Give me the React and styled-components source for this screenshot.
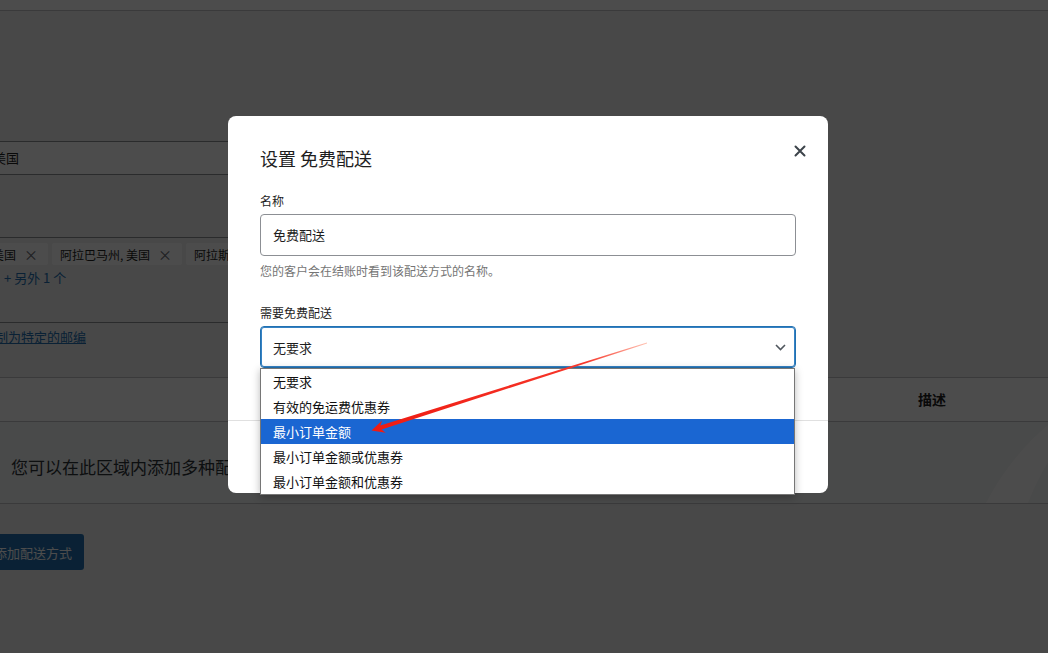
import React from 'react'
import styled, { createGlobalStyle } from 'styled-components'

const GlobalStyle = createGlobalStyle`
  html, body { margin: 0; padding: 0; height: 100%; overflow: hidden; }
  body {
    background: #f0f0f1;
    font-family: "Noto Sans CJK SC", "Noto Sans", sans-serif;
    color: #1e1e1e;
  }
`

const options = ['无要求', '有效的免运费优惠券', '最小订单金额', '最小订单金额或优惠券', '最小订单金额和优惠券']

function App() {
    return (
        <Page>
            <GlobalStyle />
            <TopBar />
            <Content>
                <RegionBox>美国</RegionBox>
                <TagBox>
                    <TagRow>
                        <Tag>美国<TagClose>×</TagClose></Tag>
                        <Tag>阿拉巴马州, 美国<TagClose>×</TagClose></Tag>
                        <Tag>阿拉斯加州, 美国<TagClose>×</TagClose></Tag>
                    </TagRow>
                    <MoreLink>+ 另外 1 个</MoreLink>
                </TagBox>
                <PostcodeLink>限制为特定的邮编</PostcodeLink>
                <Table>
                    <HeadRow>
                        <HeadCell />
                        <HeadCell>名称</HeadCell>
                        <HeadCell>启用</HeadCell>
                        <HeadCell>描述</HeadCell>
                    </HeadRow>
                    <BodyRow>
                        <EmptyText>您可以在此区域内添加多种配送方式。只有该区域内的客户才会看到这些配送方式。</EmptyText>
                        <Swoosh viewBox="0 0 88 81" width="88" height="81">
                            <path d="M26 81 Q50 35 88 3 L88 40 Q76 60 68 81 Z" fill="#ffffff" />
                        </Swoosh>
                    </BodyRow>
                </Table>
                <PrimaryButton>添加配送方式</PrimaryButton>
            </Content>

            <Backdrop>
                <Modal>
                    <ModalHeader>
                        <ModalTitle>设置 免费配送</ModalTitle>
                        <CloseButton aria-label="关闭">
                            <svg width="12" height="12" viewBox="0 0 12 12">
                                <path d="M1.5 1.5 L10.5 10.5 M10.5 1.5 L1.5 10.5" stroke="#3c434a" strokeWidth="2" strokeLinecap="round" />
                            </svg>
                        </CloseButton>
                    </ModalHeader>
                    <ModalBody>
                        <Label>名称</Label>
                        <TextInput>免费配送</TextInput>
                        <Help>您的客户会在结账时看到该配送方式的名称。</Help>
                        <Label $gap={26}>需要免费配送</Label>
                        <SelectWrap>
                            <SelectBox>
                                无要求
                                <svg width="11" height="7" viewBox="0 0 11 7">
                                    <path d="M1 1 L5.5 5.5 L10 1" fill="none" stroke="#50575e" strokeWidth="1.6" />
                                </svg>
                            </SelectBox>
                            <Dropdown>
                                {options.map((item, index) => (
                                    <Option key={item} $active={index === 2}>{item}</Option>
                                ))}
                            </Dropdown>
                        </SelectWrap>
                    </ModalBody>
                    <ModalFooter />
                </Modal>
            </Backdrop>

            {/* annotation arrow */}
            <Annotation viewBox="0 0 1048 653" width="1048" height="653">
                <defs>
                    <linearGradient id="arrowFade" gradientUnits="userSpaceOnUse" x1="647" y1="343" x2="372" y2="430">
                        <stop offset="0" stopColor="#ffc4b4" />
                        <stop offset="0.22" stopColor="#f7372a" />
                        <stop offset="1" stopColor="#ee1b12" />
                    </linearGradient>
                </defs>
                <polygon
                    points="371.5,430.5 385.7,432.8 381.6,429.4 647.1,343.4 646.9,342.6 380.4,425.6 382.1,420.4"
                    fill="url(#arrowFade)"
                />
            </Annotation>
        </Page>
    )
}

export default App

const Page = styled.div`
    position: relative;
    width: 1048px;
    height: 653px;
    overflow: hidden;
`

const TopBar = styled.div`
    height: 10px;
    background: #fff;
    border-bottom: 1px solid #c3c4c7;
`

const Content = styled.div`
    margin-left: -20px;
    width: 1088px;
    padding-top: 130px;
    display: flex;
    flex-direction: column;
    align-items: flex-start;
`

const RegionBox = styled.div`
    box-sizing: border-box;
    width: 700px;
    height: 34px;
    padding-left: 12px;
    background: #fff;
    border: 1px solid #8c8f94;
    font-size: 13px;
    line-height: 32px;
`

const TagBox = styled.div`
    box-sizing: border-box;
    margin-top: 62px;
    width: 700px;
    height: 86px;
    padding: 5px 0 0 4px;
    border-top: 1px solid #8c8f94;
    border-bottom: 1px solid #8c8f94;
`

const TagRow = styled.div`
    display: flex;
    gap: 4px;
`

const Tag = styled.span`
    display: inline-flex;
    align-items: center;
    height: 22px;
    padding: 0 10px 0 8px;
    background: #fff;
    border-radius: 2px;
    font-size: 12px;
    white-space: nowrap;
`

const TagClose = styled.span`
    margin-left: 8px;
    font-size: 14px;
    color: #646970;
`

const MoreLink = styled.div`
    margin: 4px 0 0 20px;
    font-size: 13px;
    line-height: 18px;
    color: #2271b1;
`

const PostcodeLink = styled.a`
    margin: 5px 0 0 2px;
    font-size: 13px;
    line-height: 18px;
    color: #2271b1;
    text-decoration: underline;
`

const Table = styled.div`
    margin-top: 31px;
    width: 100%;
    background: #fff;
    border-top: 1px solid #c3c4c7;
`

const HeadRow = styled.div`
    display: grid;
    grid-template-columns: 268px 300px 350px 1fr;
    height: 43px;
    border-bottom: 1px solid #c3c4c7;
`

const HeadCell = styled.div`
    padding-left: 20px;
    font-size: 14px;
    font-weight: 700;
    line-height: 43px;
`

const BodyRow = styled.div`
    position: relative;
    box-sizing: border-box;
    height: 82px;
    padding: 8px 0 0 31px;
    display: flex;
    align-items: center;
    background: #f6f7f7;
    border-bottom: 1px solid #c3c4c7;
    overflow: hidden;
`

const EmptyText = styled.p`
    margin: 0;
    font-size: 17px;
    line-height: 24px;
    color: #2c3338;
    white-space: nowrap;
`

const Swoosh = styled.svg`
    position: absolute;
    left: 980px;
    top: 0;
`

const PrimaryButton = styled.button`
    margin: 30px 0 0 2px;
    height: 36px;
    padding: 0 12px;
    border: 0;
    border-radius: 3px;
    background: #2271b1;
    color: #fff;
    font-family: inherit;
    font-size: 13px;
`

const Backdrop = styled.div`
    position: absolute;
    inset: 0;
    z-index: 1;
    background: rgba(0, 0, 0, 0.7);
    display: flex;
    align-items: flex-start;
    padding: 116px 0 0 228px;
`

const Modal = styled.div`
    position: relative;
    width: 600px;
    height: 377px;
    background: #fff;
    border-radius: 8px;
    display: flex;
    flex-direction: column;
`

const ModalHeader = styled.div`
    display: flex;
    justify-content: space-between;
    align-items: flex-start;
    padding: 29px 22px 0 32px;
`

const ModalTitle = styled.h1`
    margin: 0;
    font-size: 18px;
    line-height: 26px;
    font-weight: 400;
    color: #1e1e1e;
`

const CloseButton = styled.button`
    display: flex;
    width: 12px;
    height: 12px;
    margin-top: 0;
    padding: 0;
    border: 0;
    background: none;
`

const ModalBody = styled.div`
    display: flex;
    flex-direction: column;
    padding: 0 32px 52px;
`

const Label = styled.label`
    margin-top: ${p => p.$gap || 22}px;
    margin-bottom: 5px;
    font-size: 12px;
    line-height: 16px;
    color: #1e1e1e;
`

const TextInput = styled.div`
    box-sizing: border-box;
    height: 42px;
    padding: 0 12px;
    border: 1px solid #8c8f94;
    border-radius: 4px;
    font-size: 13px;
    line-height: 40px;
`

const Help = styled.p`
    margin: 7px 0 0;
    font-size: 12px;
    line-height: 16px;
    color: #757575;
`

const SelectWrap = styled.div`
    position: relative;
`

const SelectBox = styled.div`
    box-sizing: border-box;
    height: 42px;
    padding: 0 9px 0 12px;
    display: flex;
    align-items: center;
    justify-content: space-between;
    border: 1px solid #2271b1;
    box-shadow: inset 0 0 0 1px #3582c4;
    border-radius: 4px;
    font-size: 13px;
`

const Dropdown = styled.div`
    position: absolute;
    top: 100%;
    left: 0;
    width: calc(100% - 1px);
    box-sizing: border-box;
    background: #fff;
    border: 1px solid #767676;
    box-shadow: 0 2px 8px rgba(0, 0, 0, 0.28);
    z-index: 2;
`

const Option = styled.div`
    height: 25px;
    padding-left: 12px;
    font-size: 13px;
    line-height: 25px;
    color: ${p => (p.$active ? '#fff' : '#101010')};
    background: ${p => (p.$active ? '#1a66d2' : 'transparent')};
`

const ModalFooter = styled.div`
    flex: 1;
    border-top: 1px solid #e0e0e0;
`

const Annotation = styled.svg`
    position: absolute;
    left: 0;
    top: 0;
    z-index: 5;
    pointer-events: none;
`
